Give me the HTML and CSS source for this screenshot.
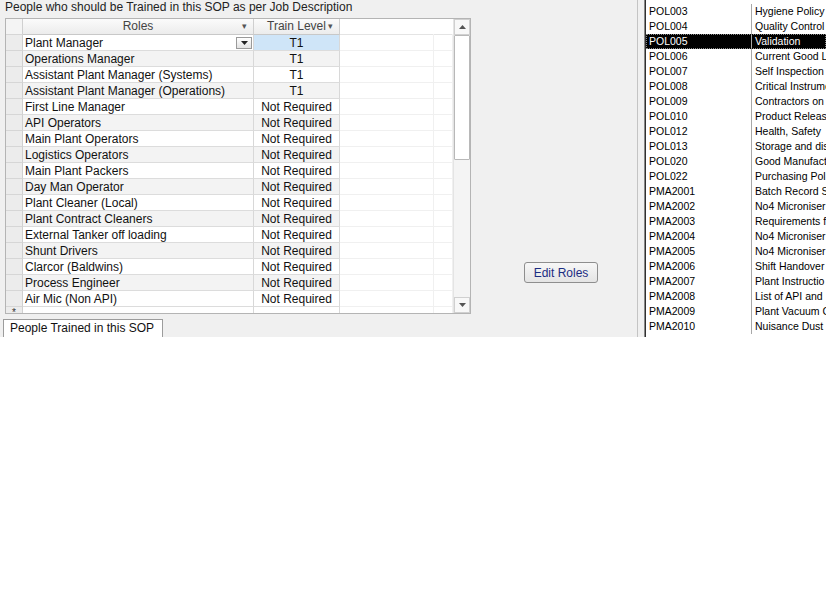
FILE: index.html
```html
<!DOCTYPE html>
<html>
<head>
<meta charset="utf-8">
<title>SOP Training</title>
<link rel="stylesheet" href="styles.css">
</head>
<body>
<div class="screen">
  <div class="form">
    <div class="title">People who should be Trained in this SOP as per Job Description</div>
    <div class="mid">
      <div class="grid">
        <div class="grid_body">
          <div class="row head">
            <div class="sel corner"></div>
            <div class="cell hd">Roles<span class="arr">&#9662;</span></div>
            <div class="cell hd">Train Level<span class="arr">&#9662;</span></div>
            <div class="cell fill"></div>
            <div class="cell fill"></div>
          </div>
          <div class="row">
            <div class="sel"></div>
            <div class="cell role">Plant Manager<span class="combo"><svg width="9" height="5" viewBox="0 0 9 5"><path d="M1 0h7L4.5 4z" fill="#222"/></svg></span></div>
            <div class="cell lvl cur">T1</div>
            <div class="cell fill"></div><div class="cell fill"></div>
          </div>
          <div class="row alt"><div class="sel"></div><div class="cell role">Operations Manager</div><div class="cell lvl">T1</div><div class="cell fill"></div><div class="cell fill"></div></div>
          <div class="row"><div class="sel"></div><div class="cell role">Assistant Plant Manager (Systems)</div><div class="cell lvl">T1</div><div class="cell fill"></div><div class="cell fill"></div></div>
          <div class="row alt"><div class="sel"></div><div class="cell role">Assistant Plant Manager (Operations)</div><div class="cell lvl">T1</div><div class="cell fill"></div><div class="cell fill"></div></div>
          <div class="row"><div class="sel"></div><div class="cell role">First Line Manager</div><div class="cell lvl">Not Required</div><div class="cell fill"></div><div class="cell fill"></div></div>
          <div class="row alt"><div class="sel"></div><div class="cell role">API Operators</div><div class="cell lvl">Not Required</div><div class="cell fill"></div><div class="cell fill"></div></div>
          <div class="row"><div class="sel"></div><div class="cell role">Main Plant Operators</div><div class="cell lvl">Not Required</div><div class="cell fill"></div><div class="cell fill"></div></div>
          <div class="row alt"><div class="sel"></div><div class="cell role">Logistics Operators</div><div class="cell lvl">Not Required</div><div class="cell fill"></div><div class="cell fill"></div></div>
          <div class="row"><div class="sel"></div><div class="cell role">Main Plant Packers</div><div class="cell lvl">Not Required</div><div class="cell fill"></div><div class="cell fill"></div></div>
          <div class="row alt"><div class="sel"></div><div class="cell role">Day Man Operator</div><div class="cell lvl">Not Required</div><div class="cell fill"></div><div class="cell fill"></div></div>
          <div class="row"><div class="sel"></div><div class="cell role">Plant Cleaner (Local)</div><div class="cell lvl">Not Required</div><div class="cell fill"></div><div class="cell fill"></div></div>
          <div class="row alt"><div class="sel"></div><div class="cell role">Plant Contract Cleaners</div><div class="cell lvl">Not Required</div><div class="cell fill"></div><div class="cell fill"></div></div>
          <div class="row"><div class="sel"></div><div class="cell role">External Tanker off loading</div><div class="cell lvl">Not Required</div><div class="cell fill"></div><div class="cell fill"></div></div>
          <div class="row alt"><div class="sel"></div><div class="cell role">Shunt Drivers</div><div class="cell lvl">Not Required</div><div class="cell fill"></div><div class="cell fill"></div></div>
          <div class="row"><div class="sel"></div><div class="cell role">Clarcor (Baldwins)</div><div class="cell lvl">Not Required</div><div class="cell fill"></div><div class="cell fill"></div></div>
          <div class="row alt"><div class="sel"></div><div class="cell role">Process Engineer</div><div class="cell lvl">Not Required</div><div class="cell fill"></div><div class="cell fill"></div></div>
          <div class="row"><div class="sel"></div><div class="cell role">Air Mic (Non API)</div><div class="cell lvl">Not Required</div><div class="cell fill"></div><div class="cell fill"></div></div>
          <div class="row"><div class="sel newrec">*</div><div class="cell role"></div><div class="cell lvl"></div><div class="cell fill"></div><div class="cell fill"></div></div>
        </div>
        <div class="vscroll">
          <div class="sbtn"><svg width="7" height="4" viewBox="0 0 7 4"><path d="M0 4h7L3.5 0z" fill="#555"/></svg></div>
          <div class="track"><div class="thumb"></div></div>
          <div class="sbtn"><svg width="7" height="4" viewBox="0 0 7 4"><path d="M0 0h7L3.5 4z" fill="#555"/></svg></div>
        </div>
      </div>
      <div class="btn_area"><button class="btn">Edit Roles</button></div>
    </div>
    <div class="tabs"><div class="tab">People Trained in this SOP</div></div>
  </div>
  <div class="split"></div>
  <div class="list">
    <div class="li"><span class="code">POL003</span><span class="desc">Hygiene Policy</span></div>
    <div class="li"><span class="code">POL004</span><span class="desc">Quality Control</span></div>
    <div class="li on"><span class="code">POL005</span><span class="desc">Validation</span></div>
    <div class="li"><span class="code">POL006</span><span class="desc">Current Good L</span></div>
    <div class="li"><span class="code">POL007</span><span class="desc">Self Inspection</span></div>
    <div class="li"><span class="code">POL008</span><span class="desc">Critical Instrume</span></div>
    <div class="li"><span class="code">POL009</span><span class="desc">Contractors on</span></div>
    <div class="li"><span class="code">POL010</span><span class="desc">Product Releas</span></div>
    <div class="li"><span class="code">POL012</span><span class="desc">Health, Safety</span></div>
    <div class="li"><span class="code">POL013</span><span class="desc">Storage and dis</span></div>
    <div class="li"><span class="code">POL020</span><span class="desc">Good Manufact</span></div>
    <div class="li"><span class="code">POL022</span><span class="desc">Purchasing Pol</span></div>
    <div class="li"><span class="code">PMA2001</span><span class="desc">Batch Record S</span></div>
    <div class="li"><span class="code">PMA2002</span><span class="desc">No4 Microniser</span></div>
    <div class="li"><span class="code">PMA2003</span><span class="desc">Requirements f</span></div>
    <div class="li"><span class="code">PMA2004</span><span class="desc">No4 Microniser</span></div>
    <div class="li"><span class="code">PMA2005</span><span class="desc">No4 Microniser</span></div>
    <div class="li"><span class="code">PMA2006</span><span class="desc">Shift Handover</span></div>
    <div class="li"><span class="code">PMA2007</span><span class="desc">Plant Instructio</span></div>
    <div class="li"><span class="code">PMA2008</span><span class="desc">List of API and</span></div>
    <div class="li"><span class="code">PMA2009</span><span class="desc">Plant Vacuum C</span></div>
    <div class="li"><span class="code">PMA2010</span><span class="desc">Nuisance Dust</span></div>
  </div>
</div>
</body>
</html>
```
FILE: styles.css
```css
body {margin:0;background:#fff;font-family:"Liberation Sans",Arial,sans-serif;font-size:12px;color:#111;}
.screen {display:flex;height:337px;overflow:hidden;}

/* left form */
.form {width:637px;flex:none;background:#f0f0f0;display:flex;flex-direction:column;}
.title {height:16px;line-height:15px;padding-left:5px;color:#222;}
.mid {display:flex;align-items:flex-start;margin-top:2px;}
.grid {margin-left:5px;width:466px;height:296px;box-sizing:border-box;border:1px solid #b4b4b4;background:#fff;display:flex;overflow:hidden;}
.grid_body {flex:1;overflow:hidden;}
.row {display:grid;grid-template-columns:17px 231px 86px 94px 1fr;height:16px;}
.row .sel {background:#ececec;border-right:1px solid #d0d0d0;border-bottom:1px solid #d6d6d6;box-sizing:border-box;}
.cell {box-sizing:border-box;border-right:1px solid #d8d8d8;border-bottom:1px solid #dcdcdc;line-height:15px;padding-top:1px;white-space:nowrap;overflow:hidden;}
.head {height:16px;}
.head .sel {background:#f4f4f4;}
.hd {padding-top:0;background:linear-gradient(#fbfbfb,#ececec);color:#444;text-align:center;position:relative;border-right-color:#cfcfcf;border-bottom-color:#c8c8c8;}
.hd .arr {position:absolute;right:6px;top:0;font-size:9px;color:#555;}
.head .fill {background:#fff;border-bottom-color:#e4e4e4;border-right-color:#fff;}
.role {padding-left:2px;position:relative;}
.lvl {text-align:center;}
.fill {border-right-color:#f0f0f0;border-bottom-color:#f0f0f0;}
.alt .role,.alt .lvl {background:#f3f3f3;}
.cur {background:#cfe5f8;}
.combo {position:absolute;right:1px;top:2px;width:16px;height:12px;box-sizing:border-box;border:1px solid #9a9a9a;background:linear-gradient(#fff,#e2e2e2);display:flex;align-items:center;justify-content:center;}
.newrec {font-size:10px;line-height:12px;text-align:center;color:#333;}

.vscroll {width:16px;flex:none;display:flex;flex-direction:column;background:#f4f4f4;border-left:1px solid #e4e4e4;}
.sbtn {height:16px;box-sizing:border-box;border:1px solid #d0d0d0;background:#f8f8f8;display:flex;align-items:center;justify-content:center;}
.track {flex:1;}
.thumb {height:125px;box-sizing:border-box;border:1px solid #b8b8b8;background:#fff;border-radius:1px;}

.btn_area {margin-left:53px;margin-top:244px;}
.btn {width:74px;height:21px;padding:0;font:12px "Liberation Sans",Arial,sans-serif;color:#1c2c82;background:linear-gradient(#f7f7f7,#e4e4e4);border:1px solid #8e8e8e;border-radius:3px;}

.tabs {margin-top:5px;padding-left:3px;}
.tab {display:inline-block;height:18px;line-height:17px;padding:0 8px 0 6px;background:#fff;border:1px solid #9c9c9c;border-bottom:none;box-sizing:border-box;}

/* separator + right list */
.split {width:8px;flex:none;background:#f0f0f0;border-left:1px solid #c4c4c4;box-sizing:border-box;border-right:1px solid #888;}
.list {flex:1;background:#fff;border-left:1px solid #303030;padding-top:4px;font-size:10.5px;color:#000;overflow:hidden;}
.li {display:flex;height:15px;line-height:14px;white-space:nowrap;}
.code {width:102px;padding-left:3px;flex:none;}
.desc {border-left:1px solid #a8a8a8;padding-left:3px;}
.li.on {background:#000;color:#fff;outline:1px dotted #888;outline-offset:-1px;}
```
